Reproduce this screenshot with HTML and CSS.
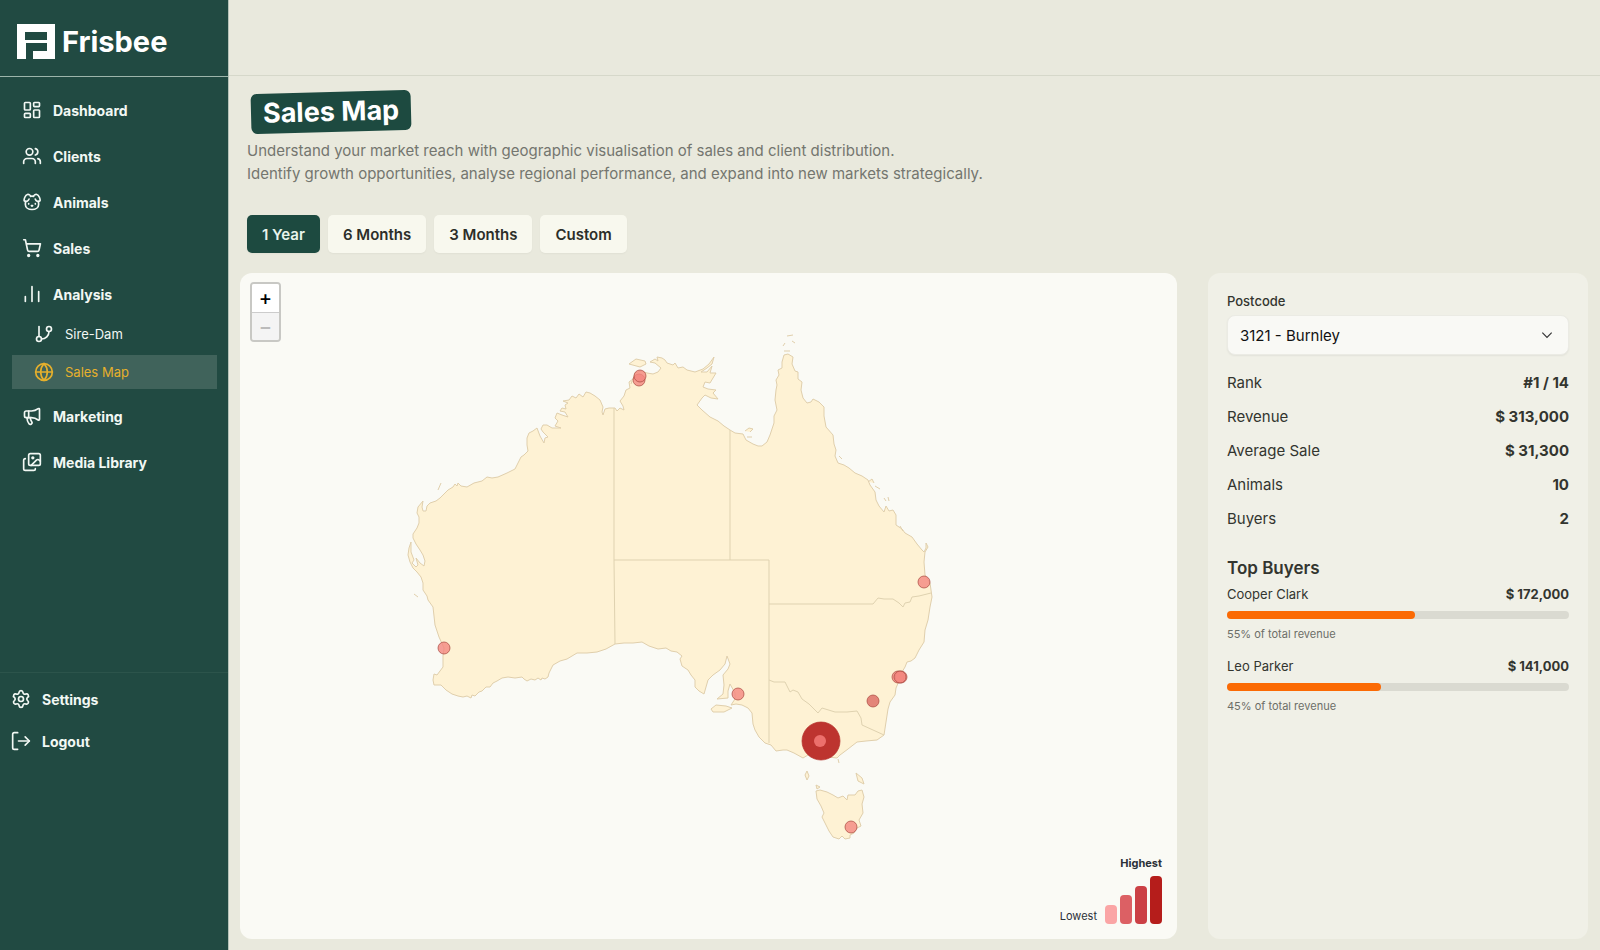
FILE: index.html
```html
<!DOCTYPE html>
<html lang="en">
<head>
    <meta charset="UTF-8">
    <meta name="viewport" content="width=device-width, initial-scale=1.0">
    <title>Frisbee - Sales Map</title>
    <link rel="stylesheet" href="styles.css">
</head>
<body>
    <aside class="sidebar">
        <div class="brand">
            <svg class="brand-logo" viewBox="0 0 38 35" aria-hidden="true">
                <path fill="#fff" fill-rule="evenodd" d="M0 0H38V35H16V27H30V19H9V35H0ZM8 8V16H30V8Z"/>
            </svg>
            <span>Frisbee</span>
        </div>
        <nav class="nav">
            <a href="#" class="nav-link">
                <svg class="icon" viewBox="0 0 24 24"><rect x="3" y="3" width="7" height="9" rx="1"/><rect x="14" y="3" width="7" height="5" rx="1"/><rect x="14" y="12" width="7" height="9" rx="1"/><rect x="3" y="16" width="7" height="5" rx="1"/></svg>
                Dashboard
            </a>
            <a href="#" class="nav-link">
                <svg class="icon" viewBox="0 0 24 24"><path d="M16 21v-2a4 4 0 0 0-4-4H6a4 4 0 0 0-4 4v2"/><circle cx="9" cy="7" r="4"/><path d="M22 21v-2a4 4 0 0 0-3-3.870"/><path d="M16 3.130a4 4 0 0 1 0 7.750"/></svg>
                Clients
            </a>
            <a href="#" class="nav-link">
                <svg class="icon" viewBox="0 0 24 24"><path d="M11.250 16.250h1.500L12 17z"/><path d="M16 14v.500"/><path d="M8 14v.500"/><path d="M4.420 11.247A13.152 13.152 0 0 0 4 14.556C4 18.728 7.582 21 12 21s8-2.272 8-6.444a11.702 11.702 0 0 0-.493-3.309"/><path d="M8.500 8.500c-.384 1.050-1.083 2.028-2.344 2.500-1.931.722-3.576-.297-3.656-1-.113-.994 1.177-6.530 4-7 1.923-.321 3.651.845 3.651 2.235A7.497 7.497 0 0 1 14 5.277c0-1.390 1.844-2.598 3.767-2.277 2.823.470 4.113 6.006 4 7-.080.703-1.725 1.722-3.656 1-1.261-.472-1.855-1.450-2.239-2.500"/></svg>
                Animals
            </a>
            <a href="#" class="nav-link">
                <svg class="icon" viewBox="0 0 24 24"><circle cx="8" cy="21" r="1"/><circle cx="19" cy="21" r="1"/><path d="M2.050 2.050h2l2.660 12.420a2 2 0 0 0 2 1.580h9.780a2 2 0 0 0 1.950-1.570l1.650-7.430H5.120"/></svg>
                Sales
            </a>
            <a href="#" class="nav-link">
                <svg class="icon" viewBox="0 0 24 24"><path d="M4 21v-6M12 21V3M20 21V9"/></svg>
                Analysis
            </a>
            <a href="#" class="nav-link sub">
                <svg class="icon" viewBox="0 0 24 24"><path d="M6 3v12"/><circle cx="18" cy="6" r="3"/><circle cx="6" cy="18" r="3"/><path d="M18 9a9 9 0 0 1-9 9"/></svg>
                Sire-Dam
            </a>
            <a href="#" class="nav-link sub active" aria-current="page">
                <svg class="icon" viewBox="0 0 24 24"><circle cx="12" cy="12" r="10"/><path d="M12 2a14.500 14.500 0 0 0 0 20 14.500 14.500 0 0 0 0-20"/><path d="M2 12h20"/></svg>
                Sales Map
            </a>
            <a href="#" class="nav-link">
                <svg class="icon" viewBox="0 0 24 24"><path d="M11 6a13 13 0 0 0 8.400-2.800A1 1 0 0 1 21 4v12a1 1 0 0 1-1.600.800A13 13 0 0 0 11 14H5a2 2 0 0 1-2-2V8a2 2 0 0 1 2-2z"/><path d="M6 14a12 12 0 0 0 2.400 7.200 2 2 0 0 0 3.200-2.400A8 8 0 0 1 10 14"/><path d="M8 6v8"/></svg>
                Marketing
            </a>
            <a href="#" class="nav-link">
                <svg class="icon" viewBox="0 0 24 24"><path d="m22 11-1.296-1.296a2.400 2.400 0 0 0-3.408 0L11 16"/><path d="M4 8a2 2 0 0 0-2 2v10a2 2 0 0 0 2 2h10a2 2 0 0 0 2-2"/><circle cx="13" cy="7" r="1"/><rect x="8" y="2" width="14" height="14" rx="2"/></svg>
                Media Library
            </a>
        </nav>
        <div class="sidebar-footer">
            <a href="#" class="nav-link">
                <svg class="icon" viewBox="0 0 24 24"><path d="M9.671 4.136a2.340 2.340 0 0 1 4.659 0 2.340 2.340 0 0 0 3.319 1.915 2.340 2.340 0 0 1 2.330 4.033 2.340 2.340 0 0 0 0 3.831 2.340 2.340 0 0 1-2.330 4.033 2.340 2.340 0 0 0-3.319 1.915 2.340 2.340 0 0 1-4.659 0 2.340 2.340 0 0 0-3.320-1.915 2.340 2.340 0 0 1-2.330-4.033 2.340 2.340 0 0 0 0-3.831A2.340 2.340 0 0 1 6.350 6.051a2.340 2.340 0 0 0 3.319-1.915"/><circle cx="12" cy="12" r="3"/></svg>
                Settings
            </a>
            <a href="#" class="nav-link">
                <svg class="icon" viewBox="0 0 24 24"><path d="M8 2H4a2 2 0 0 0-2 2v16a2 2 0 0 0 2 2h4"/><path d="M9 12h13"/><path d="m17 7 5 5-5 5"/></svg>
                Logout
            </a>
        </div>
    </aside>

    <div class="page">
        <header class="topbar"></header>
        <main class="content">
            <div class="intro">
                <h1>Sales Map</h1>
                <p>Understand your market reach with geographic visualisation of sales and client distribution.<br>
                Identify growth opportunities, analyse regional performance, and expand into new markets strategically.</p>
                <div class="ranges">
                    <button type="button" class="range selected">1 Year</button>
                    <button type="button" class="range">6 Months</button>
                    <button type="button" class="range">3 Months</button>
                    <button type="button" class="range">Custom</button>
                </div>
            </div>

            <div class="panels">
                <section class="map-card">
                    <svg class="map" viewBox="240 273 937 666" role="img" aria-label="Map of sales in Australia">
                        <g class="land">
                            <!-- west and south-west coast -->
                            <path d="M615 644L606 649L597 652L587 653L577 653L567 659L560 661L553 665L551 669L549 673L548 677L545 679L542 678L541 680L538 678L535 680L531 679L527 681L524 679L522 677L515 678L508 677L502 678L497 681L493 683L490 687L486 687L482 691L479 692L475 696L472 695L471 698L467 696L463 697L458 696L452 694L446 690L441 685L434 685L433 680L434 674L437 675L440 671L443 667L443 656L444 648L439 637L435 625L434 616L433 607L428 600L427 596L423 590L423 583L421 577L417 572L413 568L410 562L408 555L409 548L411 542L411 552L414 560L412 563L416 567L418 565L416 558L420 563L424 566L425 561L423 555L420 550L416 544L413 538L413 534L417 528L419 523L419 517L417 513L418 507L423 501L422 507L423 511L426 511L427 506L430 503L436 501L440 498L444 494L448 490L453 487L455 484L457 486L458 483L461 486L467 487L474 483L482 481L487 477L492 478L498 477L507 473L515 469L518 463L521 457L524 455L528 451L527 445L527 438L529 433L533 431L537 428L540 436L544 443L545 438L548 437L543 432L541 429L543 425L547 425L552 428L561 428L555 426L558 421L555 418L557 413L562 415L568 417L565 412L560 411L562 408L566 409L565 405L568 403L563 401L569 400L572 396L576 398L579 394L583 397L586 392L590 393L595 396L600 400L603 407L602 412L603 415L605 409L609 408L615 408L617 411L620 408L624 410L623 406L620 401L624 396L626 390L630 388L629 382L633 379L635 373L641 371L647 373L653 374L658 372L661 368L655 363L650 362L655 359L658 361L657 357L662 358L665 360L667 363L673 365L675 363L678 368L683 367L687 370L695 372L703 369L709 364L714 357L712 364L707 368L701 372L707 372L712 366L710 373L716 373L713 378L710 383L705 382L703 387L708 389L716 390L713 393L718 399L711 398L705 395L702 398L697 405L702 410L710 417L718 421L724 426L730 430L735 433L743 434L746 440L753 444L758 446L762 446L767 442L770 435L774 423L774 416L777 410L775 400L776 390L777 385L776 380L779 375L778 370L782 368L782 362L784 355L788 354L793 357L792 364L795 371L798 372L798 379L802 382L801 390L803 398L807 403L811 402L813 399L819 402L824 407L824 416L826 427L833 435L834 444L836 450L835 456L838 463L844 465L849 468L855 473L862 476L868 480L870 485L875 492L876 500L879 506L884 512L886 506L889 511L893 510L896 515L896 525L902 529L905 533L912 537L917 544L922 550L924 552L926 548L926 543L928 547L925 552L924 562L925 575L930 583L932 597L930 607L928 620L925 630L924 642L919 650L915 658L911 661L907 662L905 667L902 672L899 681L896 688L895 695L890 702L888 709L886 722L884 735L877 740L866 741L857 742L848 749L840 755L837 758L828 757L821 755L813 752L803 758L794 753L787 750L783 750L776 751L771 745L765 743L759 737L755 730L753 724L752 713L748 708L742 705L736 704L731 705L735 699L735 693L730 684L728 691L728 698L717 699L723 694L724 685L723 675L728 669L730 664L727 656L725 664L720 670L713 675L708 680L706 687L704 694L699 691L695 687L695 680L691 675L688 670L682 666L680 659L682 656L677 652L671 651L666 648L658 649L649 646L642 642L633 643L624 643Z"/>
                            <!-- Tasmania and islands -->
                            <path d="M816 791L820 790L827 792L833 795L838 798L843 796L847 800L848 795L855 795L858 791L862 790L864 797L862 804L863 813L859 820L861 826L857 828L854 833L850 835L850 838L845 839L842 836L839 839L833 837L829 831L825 823L822 817L824 813L821 806L817 799Z"/>
                            <path d="M711 709L716 705L726 706L732 708L724 712L713 712ZM629 364L636 359L645 361L646 364L640 367ZM807 771L809 776L807 780L805 775ZM856 773L862 778L864 784L858 781ZM816 785L820 787L817 789ZM745 431L749 428L753 429L750 432M747 437L752 437M783 346L785 343M784 351L790 351M787 336L793 335M792 341L795 343M868 482L872 479L874 483M875 486L880 489M884 498L886 501M888 497L889 501M900 526L903 531M839 456L842 459M438 490L441 483M414 594L418 597M631 384L632 381M838 759L839 763"/>
                        </g>
                        <g class="borders">
                            <path d="M614 408V560L615 644M730 430V560M614 560H769V743M769 604H873L878 598L884 599L893 599L899 603L903 607L905 603L910 602L912 597L919 596L931 593"/>
                            <path d="M769 680L774 682L785 682L790 692L793 690L798 692L802 699L809 704L818 713L822 708L835 712L847 712L857 711L861 718L862 725L873 730L884 735"/>
                        </g>
                        <g class="pins">
                            <circle cx="639" cy="380" r="6"/>
                            <circle cx="640" cy="376" r="6"/>
                            <circle cx="924" cy="582" r="6"/>
                            <circle cx="444" cy="648" r="6"/>
                            <circle cx="738" cy="694" r="6"/>
                            <circle cx="898" cy="677" r="6"/>
                            <circle cx="901" cy="677" r="6"/>
                            <circle cx="900" cy="677" r="6"/>
                            <circle class="mid" cx="873" cy="701" r="6"/>
                            <circle cx="851" cy="827" r="6"/>
                            <circle class="top" cx="821" cy="741" r="19"/>
                            <circle class="inner" cx="820" cy="741" r="6"/>
                        </g>
                    </svg>
                    <div class="zoom">
                        <button type="button" aria-label="Zoom in">+</button>
                        <button type="button" aria-label="Zoom out" disabled>−</button>
                    </div>
                    <div class="legend">
                        <strong>Highest</strong>
                        <div class="legend-row">
                            <span>Lowest</span>
                            <i class="bar bar-1"></i>
                            <i class="bar bar-2"></i>
                            <i class="bar bar-3"></i>
                            <i class="bar bar-4"></i>
                        </div>
                    </div>
                </section>

                <section class="details">
                    <label for="postcode">Postcode</label>
                    <div class="select-wrap">
                        <select id="postcode">
                            <option>3121 - Burnley</option>
                        </select>
                        <svg class="chevron" viewBox="0 0 24 24"><path d="m4 8 8 8 8-8"/></svg>
                    </div>
                    <dl class="stats">
                        <div><dt>Rank</dt><dd>#1 / 14</dd></div>
                        <div><dt>Revenue</dt><dd>$ 313,000</dd></div>
                        <div><dt>Average Sale</dt><dd>$ 31,300</dd></div>
                        <div><dt>Animals</dt><dd>10</dd></div>
                        <div><dt>Buyers</dt><dd>2</dd></div>
                    </dl>
                    <h2>Top Buyers</h2>
                    <div class="buyer">
                        <div class="buyer-row"><span>Cooper Clark</span><strong>$ 172,000</strong></div>
                        <div class="track"><div class="fill" style="width: 55%"></div></div>
                        <small>55% of total revenue</small>
                    </div>
                    <div class="buyer">
                        <div class="buyer-row"><span>Leo Parker</span><strong>$ 141,000</strong></div>
                        <div class="track"><div class="fill" style="width: 45%"></div></div>
                        <small>45% of total revenue</small>
                    </div>
                </section>
            </div>
        </main>
    </div>
</body>
</html>
```
FILE: styles.css
```css
* {
    box-sizing: border-box;
}

body {
    margin: 0;
    min-height: 100vh;
    display: flex;
    font-family: Inter, "Liberation Sans", sans-serif;
    font-size: 15px;
    color: #33352f;
    background: #e9e9dd;
}

h1, h2, p, dl, dd {
    margin: 0;
}

button, select {
    font-family: inherit;
}

/* sidebar */
.sidebar {
    width: 229px;
    flex-shrink: 0;
    display: flex;
    flex-direction: column;
    background: #214a42;
    border-right: 1px solid #b5c2b8;
}

.brand {
    height: 77px;
    padding: 7px 17px 0;
    display: flex;
    align-items: center;
    gap: 7px;
    border-bottom: 1px solid #9db5ab;
    color: #fff;
    font-size: 29px;
    font-weight: 700;
}

.brand-logo {
    width: 38px;
    height: 35px;
}

.nav {
    flex: 1;
    padding: 10px 11px 10px 12px;
}

.nav-link {
    display: flex;
    align-items: center;
    gap: 11px;
    height: 46px;
    padding-left: 10px;
    color: #f2f8f4;
    font-size: 14px;
    font-weight: 700;
    text-decoration: none;
}

.icon {
    width: 20px;
    height: 20px;
    fill: none;
    stroke: currentColor;
    stroke-width: 2;
    stroke-linecap: round;
    stroke-linejoin: round;
}

.nav-link.sub {
    height: 34px;
    margin-bottom: 4px;
    padding-left: 22px;
    font-size: 13px;
    font-weight: 400;
}

.nav-link.active {
    background: #40635b;
    color: #e6b02c;
}

.sidebar-footer {
    min-height: 278px;
    padding: 5px 1px;
    border-top: 1px solid #2c544b;
}

.sidebar-footer .nav-link {
    height: 42px;
}

/* page */
.page {
    flex: 1;
    min-width: 0;
    display: flex;
    flex-direction: column;
}

.topbar {
    height: 76px;
    border-bottom: 1px solid #d6d8ca;
}

.content {
    flex: 1;
    display: flex;
    flex-direction: column;
    padding: 16px 12px 11px 11px;
}

.intro {
    padding-left: 7px;
}

.intro h1 {
    width: max-content;
    margin: 0 4px 7px;
    padding: 0 12px;
    border-radius: 6px;
    background: #1d4a40;
    color: #fff;
    font-size: 27px;
    font-weight: 700;
    line-height: 40px;
    transform: rotate(-1.5deg);
}

.intro p {
    color: #74766f;
    line-height: 23px;
}

.ranges {
    display: flex;
    gap: 8px;
    margin: 30px 0 20px;
}

.range {
    height: 38px;
    padding: 0 15px;
    border: 0;
    border-radius: 5px;
    background: #f8f8ee;
    color: #2c2e29;
    font-size: 15px;
    font-weight: 600;
    box-shadow: 0 1px 2px rgba(0, 0, 0, 0.04);
}

.range.selected {
    background: #1d4a40;
    color: #e8f4ec;
}

.panels {
    flex: 1;
    display: grid;
    grid-template-columns: minmax(0, 1fr) 380px;
    gap: 31px;
}

/* map */
.map-card {
    position: relative;
    border-radius: 12px;
    background: #fafaf5;
}

.map {
    display: block;
    width: 100%;
    height: 100%;
}

.land path {
    fill: #fef2d4;
    stroke: #e0cfac;
    stroke-linejoin: round;
}

.borders path {
    fill: none;
    stroke: #dfd2b0;
}

.pins circle {
    fill: #f4877f;
    fill-opacity: 0.8;
    stroke: #a8473f;
    stroke-opacity: 0.7;
}

.pins .mid {
    fill: #dc6961;
}

.pins .top {
    fill: #bd342f;
    fill-opacity: 1;
    stroke: #b3302b;
}

.pins .inner {
    fill: #f8807c;
    stroke: none;
}

.zoom {
    position: absolute;
    top: 9px;
    left: 10px;
    width: 31px;
    border: 2px solid #c8c8c4;
    border-radius: 4px;
    overflow: hidden;
}

.zoom button {
    display: block;
    width: 100%;
    height: 28px;
    padding: 0;
    border: 0;
    background: #fff;
    color: #000;
    font-size: 20px;
    font-weight: 500;
    line-height: 28px;
}

.zoom button + button {
    border-top: 1px solid #ccc;
}

.zoom button:disabled {
    background: #f4f4f4;
    color: #bbb;
}

.legend {
    position: absolute;
    right: 15px;
    bottom: 15px;
    display: flex;
    flex-direction: column;
    align-items: flex-end;
    gap: 5px;
    color: #2b3038;
    font-size: 11px;
    line-height: 16px;
}

.legend strong {
    font-weight: 700;
}

.legend-row {
    display: flex;
    align-items: flex-end;
    gap: 3px;
}

.legend-row span {
    margin-right: 5px;
}

.bar {
    width: 12px;
    border-radius: 4px;
}

.bar-1 {
    height: 19px;
    background: #faa5a5;
}

.bar-2 {
    height: 29px;
    background: #dc6064;
}

.bar-3 {
    height: 38px;
    background: #cb4045;
}

.bar-4 {
    height: 48px;
    background: #b51d1b;
}

/* details */
.details {
    padding: 18px 19px;
    border-radius: 12px;
    background: #f0f0e7;
}

.details label {
    display: block;
    font-size: 13px;
    font-weight: 500;
    line-height: 20px;
}

.select-wrap {
    position: relative;
    margin: 4px 0 11px;
}

.select-wrap select {
    width: 100%;
    height: 40px;
    padding: 0 12px;
    appearance: none;
    border: 1px solid #ebebe4;
    border-radius: 8px;
    background: #f9f9f5;
    color: #111;
    font-size: 15px;
    box-shadow: 0 1px 2px rgba(0, 0, 0, 0.06);
}

.chevron {
    position: absolute;
    top: 13px;
    right: 15px;
    width: 14px;
    height: 14px;
    fill: none;
    stroke: #333;
    stroke-width: 2;
    pointer-events: none;
}

.stats div {
    display: flex;
    justify-content: space-between;
    line-height: 34px;
}

.stats dd {
    font-weight: 700;
}

.details h2 {
    margin-top: 18px;
    font-size: 17px;
    font-weight: 600;
    line-height: 28px;
}

.buyer {
    margin-bottom: 10px;
}

.buyer-row {
    display: flex;
    justify-content: space-between;
    font-size: 13px;
    line-height: 24px;
}

.buyer-row strong {
    font-weight: 700;
}

.track {
    height: 8px;
    margin: 5px 0;
    border-radius: 4px;
    background: #dadad1;
}

.fill {
    height: 8px;
    border-radius: 4px;
    background: #fb6a04;
}

.buyer small {
    display: block;
    color: #6c6e67;
    font-size: 11px;
    line-height: 20px;
}
```
